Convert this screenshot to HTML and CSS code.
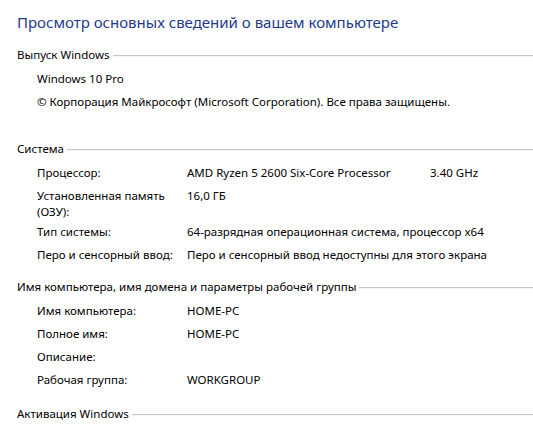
FILE: index.html
```html
<!DOCTYPE html>
<html lang="ru">

<head>
    <meta charset="utf-8">
    <meta name="viewport" content="width=device-width, initial-scale=1.0">
    <title>Система</title>

    <link rel="stylesheet" href="styles.css">

</head>

<body>

    <h1 class="titel">Просмотр основных сведений о вашем компьютере</h1>

    <section class="gruppe gruppe_windows">
        <h2 class="overskrift"><span>Выпуск Windows</span></h2>
        <div class="raekker">
            <p class="fuld">Windows 10 Pro</p>
            <p class="fuld">© Корпорация Майкрософт (Microsoft Corporation). Все права защищены.</p>
        </div>
    </section>

    <section class="gruppe">
        <h2 class="overskrift"><span>Система</span></h2>
        <div class="raekker">
            <p class="navn">Процессор:</p>
            <p class="vaerdi"><span class="cpu">AMD Ryzen 5 2600 Six-Core Processor</span>3.40 GHz</p>

            <p class="navn dobbelt">Установленная память (ОЗУ):</p>
            <p class="vaerdi">16,0 ГБ</p>

            <p class="navn">Тип системы:</p>
            <p class="vaerdi">64-разрядная операционная система, процессор x64</p>

            <p class="navn">Перо и сенсорный ввод:</p>
            <p class="vaerdi">Перо и сенсорный ввод недоступны для этого экрана</p>
        </div>
    </section>

    <section class="gruppe gruppe_navn">
        <h2 class="overskrift"><span>Имя компьютера, имя домена и параметры рабочей группы</span></h2>
        <div class="raekker">
            <p class="navn">Имя компьютера:</p>
            <p class="vaerdi">HOME-PC</p>

            <p class="navn">Полное имя:</p>
            <p class="vaerdi">HOME-PC</p>

            <p class="navn">Описание:</p>
            <p class="vaerdi"></p>

            <p class="navn">Рабочая группа:</p>
            <p class="vaerdi">WORKGROUP</p>
        </div>
    </section>

    <section class="gruppe">
        <h2 class="overskrift"><span>Активация Windows</span></h2>
    </section>

</body></html>
```

FILE: styles.css
```css
html {
    background-color: white;
}

body {
    margin: 0;
    padding: 12px 0 0 17px;
    font-family: "Noto Sans", "Open Sans", sans-serif;
    font-size: 11.5px;
    line-height: 16px;
    color: #000;
}

p {
    margin: 0;
}

.titel {
    margin: 0 0 15px 0;
    font-size: 15px;
    line-height: 20px;
    font-weight: normal;
    color: #1e3a8c;
}

.gruppe {
    margin-bottom: 16px;
}

.gruppe_windows {
    padding-bottom: 15px;
}

.gruppe_navn {
    margin-bottom: 18px;
}

.overskrift {
    display: flex;
    align-items: center;
    gap: 3px;
    margin: 0;
    font-size: 11.5px;
    line-height: 16px;
    font-weight: normal;
}

.overskrift::after {
    content: "";
    flex: 1;
    margin-top: 2px;
    border-top: 1px solid #c8c8c8;
    border-bottom: 1px solid #f6f6f6;
}

.raekker {
    display: grid;
    grid-template-columns: 150px 1fr;
    row-gap: 7px;
    margin: 8px 0 0 20px;
}

.fuld {
    grid-column: 1 / 3;
}

.navn {
    padding-right: 4px;
}

.dobbelt {
    margin-bottom: -3px;
}

.cpu {
    display: inline-block;
    width: 243px;
}
```
